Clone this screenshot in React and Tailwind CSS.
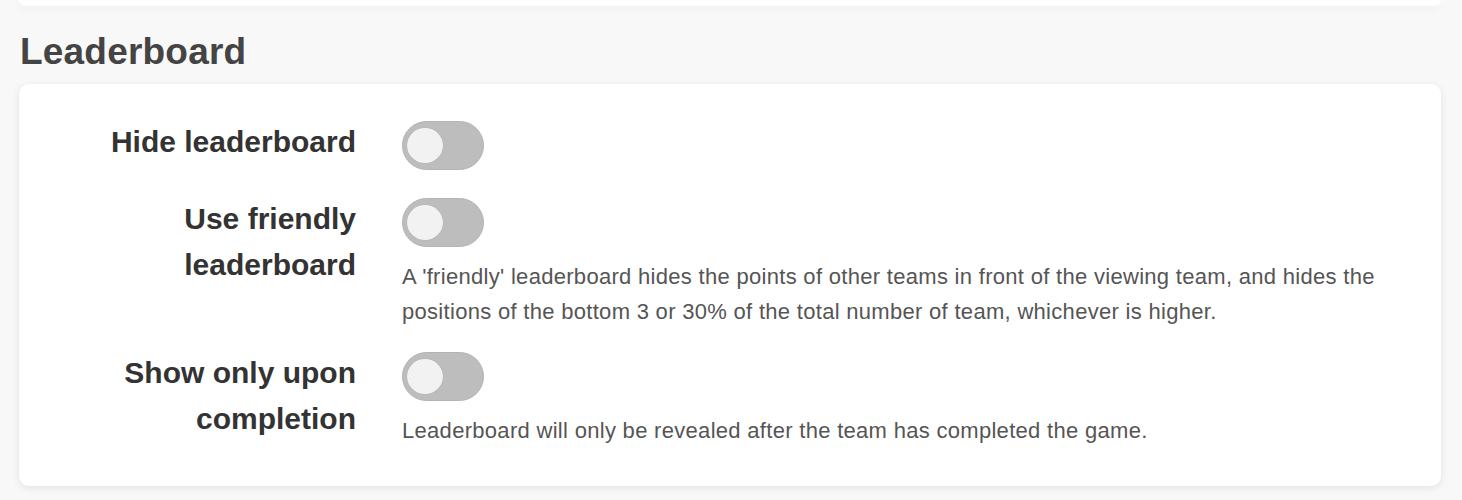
const settings = [
  {
    id: "hide",
    label: ["Hide leaderboard"],
  },
  {
    id: "friendly",
    label: ["Use friendly", "leaderboard"],
    help: "A 'friendly' leaderboard hides the points of other teams in front of the viewing team, and hides the positions of the bottom 3 or 30% of the total number of team, whichever is higher.",
  },
  {
    id: "completion",
    label: ["Show only upon", "completion"],
    help: "Leaderboard will only be revealed after the team has completed the game.",
  },
];

function Toggle({ on = false }) {
  return (
    <button
      type="button"
      role="switch"
      aria-checked={on}
      className="mt-[2px] flex h-[49px] w-[82px] items-center rounded-full border border-[#b3b3b3] bg-[#bdbdbd] pl-[4px]"
    >
      <span className="block h-[35px] w-[36px] rounded-full bg-[#f2f2f2] shadow-[0_0_1px_rgba(0,0,0,0.2)]" />
    </button>
  );
}

export default function App() {
  return (
    <div
      className="min-h-[500px] bg-[#f8f8f8] pl-[19px] pr-[21px]"
      style={{ fontFamily: '"Liberation Sans", Arial, sans-serif' }}
    >
      {/* bottom edge of the section above */}
      <div className="h-[6px] rounded-b-[10px] bg-white shadow-[0_3px_8px_rgba(0,0,0,0.04)]" />

      <h2 className="mt-[24px] mb-[10px] pl-[1px] text-[37px] leading-[44px] font-bold tracking-[0.2px] text-[#444]">
        Leaderboard
      </h2>

      <div className="rounded-[10px] bg-white pt-[35px] pb-[38px] shadow-[0_2px_8px_rgba(0,0,0,0.09)]">
        {settings.map((s, i) => (
          <div
            key={s.id}
            className={
              "grid grid-cols-[337px_1fr] gap-x-[46px] " +
              (i === 0 ? "mb-[26px]" : i === 1 ? "mb-[21px]" : "")
            }
          >
            <div className="text-right text-[30px] leading-[46px] font-bold text-[#333]">
              {s.label.map((line) => (
                <div key={line}>{line}</div>
              ))}
            </div>
            <div>
              <Toggle />
              {s.help && (
                <p className="mt-[12px] max-w-[1000px] text-[22px] leading-[35px] tracking-[0.3px] text-[#555]">
                  {s.help}
                </p>
              )}
            </div>
          </div>
        ))}
      </div>
    </div>
  );
}
